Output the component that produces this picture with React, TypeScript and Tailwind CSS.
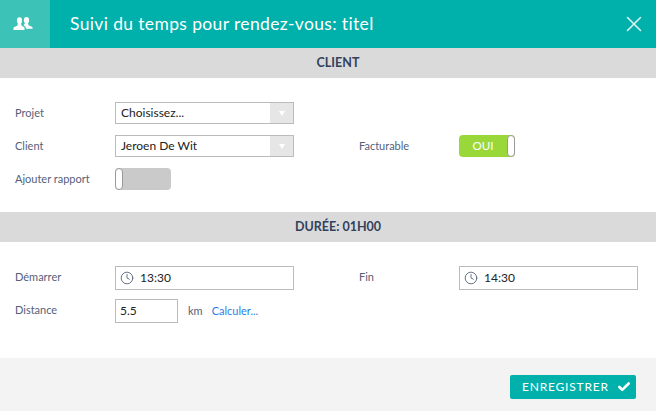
import { Check, Clock, X } from "lucide-react";

function UsersIcon() {
  return (
    <svg width="20" height="14" viewBox="0 0 20 14" fill="white">
      <ellipse cx="6.5" cy="3.6" rx="2.6" ry="3.4" />
      <ellipse cx="13.5" cy="3.2" rx="2.6" ry="3.2" />
      <path d="M5 6 L8 6 L8.5 8.6 L11.5 10.4 L11.5 13 L0.5 13 L0.5 10.6 L4.5 8.6 Z" />
      <path d="M12 6 L15 6 L15.5 8.2 L19.5 10 L19.5 11.8 L13 11.8 L12.6 9.8 L10.5 8.4 Z" />
    </svg>
  );
}

function SectionBar({ title }: { title: string }) {
  return (
    <div className="flex h-[30px] items-center justify-center bg-[#dadada] pl-5 text-[12.5px] font-bold text-[#33415c]">
      {title}
    </div>
  );
}

function Select({ value }: { value: string }) {
  return (
    <div className="flex h-[22px] w-[179px] items-center border border-[#bbbbbb] bg-white text-xs text-[#222222]">
      <span className="flex-1 pl-[5px]">{value}</span>
      <span className="flex h-full w-[23px] items-center justify-center bg-[#e6e6e6]">
        <span className="h-0 w-0 border-x-[3px] border-t-[5px] border-x-transparent border-t-white" />
      </span>
    </div>
  );
}

function TimeInput({ value }: { value: string }) {
  return (
    <div className="flex h-6 w-[179px] items-center gap-[6px] border border-[#bbbbbb] bg-white pl-1 text-xs text-[#222222]">
      <Clock size={14} strokeWidth={1.4} className="text-[#4a5670]" />
      {value}
    </div>
  );
}

function Label({ text, raised }: { text: string; raised?: boolean }) {
  return <div className={`w-[100px] text-[11px] text-[#55617a] ${raised ? "-mt-[2px]" : ""}`}>{text}</div>;
}

export default function App() {
  return (
    <div className="flex h-[411px] w-[656px] flex-col overflow-hidden bg-white font-['Lato',sans-serif]">
      <div className="flex h-12 shrink-0 items-center bg-[#00b0aa] text-white">
        <div className="flex h-full w-[50px] items-center justify-center bg-[#3cc2b7] pr-[5px]">
          <UsersIcon />
        </div>
        <h1 className="flex-1 pl-5 text-[17.5px] tracking-[0.36px]">Suivi du temps pour rendez-vous: titel</h1>
        <X size={26} strokeWidth={1.5} className="mr-[9px] text-[#d9f5f3]" />
      </div>

      <SectionBar title="CLIENT" />

      <div className="flex h-[134px] shrink-0 pl-[15px] pt-6">
        <div className="flex w-[344px] flex-col gap-[11px]">
          <div className="flex items-center">
            <Label text="Projet" />
            <Select value="Choisissez..." />
          </div>
          <div className="flex items-center">
            <Label text="Client" />
            <Select value="Jeroen De Wit" />
          </div>
          <div className="flex items-center">
            <Label text="Ajouter rapport" />
            <div className="flex h-[22px] w-14 rounded-[4px] bg-[#cacaca]">
              <span className="h-full w-2 rounded-[4px] border border-[#999999] bg-white" />
            </div>
          </div>
        </div>
        <div className="mt-[33px] flex h-[22px] items-center">
          <Label text="Facturable" />
          <div className="flex h-[22px] w-14 items-center rounded-[4px] bg-[#9ad83a] text-[11.5px] text-white">
            <span className="flex-1 text-center">OUI</span>
            <span className="h-full w-2 rounded-[4px] border border-[#999999] bg-white" />
          </div>
        </div>
      </div>

      <SectionBar title="DURÉE: 01H00" />

      <div className="flex h-[116px] shrink-0 pl-[15px] pt-6">
        <div className="flex w-[344px] flex-col gap-[9px]">
          <div className="flex items-center">
            <Label text="Démarrer" raised />
            <TimeInput value="13:30" />
          </div>
          <div className="flex items-center">
            <Label text="Distance" raised />
            <div className="flex h-6 w-[63px] items-center border border-[#bbbbbb] pl-1 text-xs text-[#222222]">5.5</div>
            <span className="ml-[10px] text-[11px] text-[#55617a]">km</span>
            <a className="ml-[9px] text-[11px] text-[#2b7de9]">Calculer...</a>
          </div>
        </div>
        <div className="flex h-6 items-center">
          <Label text="Fin" raised />
          <TimeInput value="14:30" />
        </div>
      </div>

      <div className="flex flex-1 items-start justify-end bg-[#f3f3f3] pr-5 pt-[17px]">
        <button className="flex h-6 w-[126px] items-center gap-2 rounded-[2px] bg-[#00b0aa] pl-3 text-xs tracking-[0.8px] text-white">
          ENREGISTRER
          <Check size={14} strokeWidth={4.5} />
        </button>
      </div>
    </div>
  );
}
